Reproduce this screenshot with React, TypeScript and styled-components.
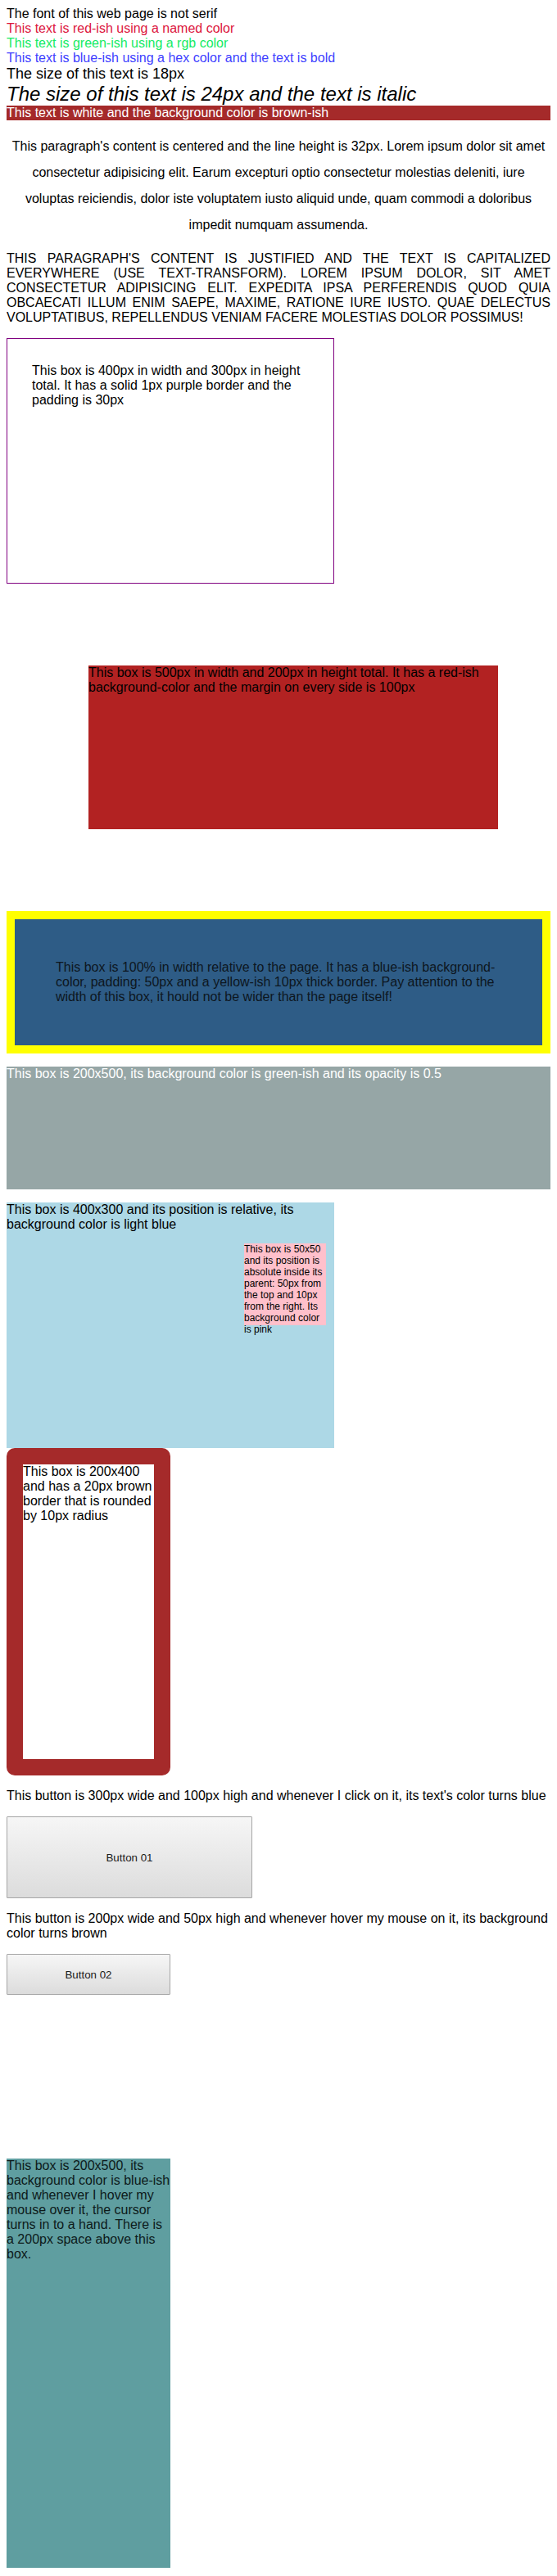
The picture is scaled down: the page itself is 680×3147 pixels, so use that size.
import React from "react";
import styled, { createGlobalStyle } from "styled-components";

const GlobalStyle = createGlobalStyle`
  html, body {
    background: #ffffff;
  }
  body {
    margin: 8px;
    font-family: "Liberation Sans", Arial, sans-serif;
    font-size: 16px;
    color: #000000;
  }
`;

const Page = styled.main`
  display: block;
`;

const Line = styled.div<{ $color?: string; $size?: number; $italic?: boolean }>`
  color: ${(p) => p.$color ?? "#000000"};
  font-size: ${(p) => (p.$size ? `${p.$size}px` : "16px")};
  font-style: ${(p) => (p.$italic ? "italic" : "normal")};
`;

const BrownBar = styled.div`
  background: #a52a2a;
  color: #ffffff;
`;

const CenteredParagraph = styled.p`
  margin: 16px 0;
  text-align: center;
  line-height: 32px;
`;

const JustifiedParagraph = styled.p`
  margin: 16px 0;
  text-align: justify;
  text-transform: uppercase;
`;

const PurpleBox = styled.div`
  box-sizing: border-box;
  width: 400px;
  height: 300px;
  border: 1px solid purple;
  padding: 30px;
`;

const RedBox = styled.div`
  width: 500px;
  height: 200px;
  margin: 100px;
  background: #b22222;
  color: #000000;
`;

const BlueBox = styled.div`
  box-sizing: border-box;
  width: 100%;
  border: 10px solid #ffff00;
  padding: 50px;
  background: #2e5c86;
  color: #0d1620;
`;

const FadedBox = styled.div`
  height: 150px;
  margin: 16px 0;
  background: #2f4f4f;
  color: #ffffff;
  opacity: 0.5;
`;

const RelativeBox = styled.div`
  position: relative;
  width: 400px;
  height: 300px;
  background: #add8e6;
`;

const PinkBadge = styled.div`
  position: absolute;
  top: 50px;
  right: 10px;
  width: 100px;
  height: 100px;
  background: #ffc0cb;
  font-size: 12px;
`;

const RoundedBox = styled.div`
  box-sizing: border-box;
  width: 200px;
  height: 400px;
  border: 20px solid #a52a2a;
  border-radius: 10px;
`;

const Caption = styled.p`
  margin: 16px 0;
`;

const DemoButton = styled.button<{ $w: number; $h: number }>`
  display: block;
  box-sizing: border-box;
  width: ${(p) => p.$w}px;
  height: ${(p) => p.$h}px;
  margin: 0;
  padding: 0;
  border: 1px solid #a6a6a6;
  border-radius: 1px;
  background: linear-gradient(to bottom, #f6f6f6 0%, #dcdcdc 100%);
  color: #1a1a1a;
  font-family: "Liberation Sans", Arial, sans-serif;
  font-size: 13.333px;
  cursor: default;

  &:active {
    color: blue;
  }
`;

const HoverButton = styled(DemoButton)`
  &:hover {
    background: #a52a2a;
  }
`;

const TealBox = styled.div`
  width: 200px;
  height: 500px;
  margin-top: 200px;
  background: #5f9ea0;
  color: #0d1a1a;
  cursor: pointer;
`;

export default function App() {
  return (
    <>
      <GlobalStyle />
      <Page>
        <Line>The font of this web page is not serif</Line>
        <Line $color="crimson">This text is red-ish using a named color</Line>
        <Line $color="rgb(20, 235, 100)">This text is green-ish using a rgb color</Line>
        <Line $color="#4040ff">This text is blue-ish using a hex color and the text is bold</Line>
        <Line $size={18}>The size of this text is 18px</Line>
        <Line $size={24} $italic>
          The size of this text is 24px and the text is italic
        </Line>
        <BrownBar>This text is white and the background color is brown-ish</BrownBar>

        <CenteredParagraph>
          This paragraph's content is centered and the line height is 32px. Lorem ipsum dolor sit amet
          consectetur adipisicing elit. Earum excepturi optio consectetur molestias deleniti, iure
          voluptas reiciendis, dolor iste voluptatem iusto aliquid unde, quam commodi a doloribus
          impedit numquam assumenda.
        </CenteredParagraph>

        <JustifiedParagraph>
          This paragraph's content is justified and the text is capitalized everywhere (use
          text-transform). Lorem ipsum dolor, sit amet consectetur adipisicing elit. Expedita ipsa
          perferendis quod quia obcaecati illum enim saepe, maxime, ratione iure iusto. Quae delectus
          voluptatibus, repellendus veniam facere molestias dolor possimus!
        </JustifiedParagraph>

        <PurpleBox>
          This box is 400px in width and 300px in height total. It has a solid 1px purple border and
          the padding is 30px
        </PurpleBox>

        <RedBox>
          This box is 500px in width and 200px in height total. It has a red-ish background-color and
          the margin on every side is 100px
        </RedBox>

        <BlueBox>
          This box is 100% in width relative to the page. It has a blue-ish background-color,
          padding: 50px and a yellow-ish 10px thick border. Pay attention to the width of this box, it
          hould not be wider than the page itself!
        </BlueBox>

        <FadedBox>This box is 200x500, its background color is green-ish and its opacity is 0.5</FadedBox>

        <RelativeBox>
          This box is 400x300 and its position is relative, its background color is light blue
          <PinkBadge>
            This box is 50x50 and its position is absolute inside its parent: 50px from the top and
            10px from the right. Its background color is pink
          </PinkBadge>
        </RelativeBox>

        <RoundedBox>This box is 200x400 and has a 20px brown border that is rounded by 10px radius</RoundedBox>

        <Caption>
          This button is 300px wide and 100px high and whenever I click on it, its text's color turns
          blue
        </Caption>
        <DemoButton $w={300} $h={100}>
          Button 01
        </DemoButton>

        <Caption>
          This button is 200px wide and 50px high and whenever hover my mouse on it, its background
          color turns brown
        </Caption>
        <HoverButton $w={200} $h={50}>
          Button 02
        </HoverButton>

        <TealBox>
          This box is 200x500, its background color is blue-ish and whenever I hover my mouse over
          it, the cursor turns in to a hand. There is a 200px space above this box.
        </TealBox>
      </Page>
    </>
  );
}
